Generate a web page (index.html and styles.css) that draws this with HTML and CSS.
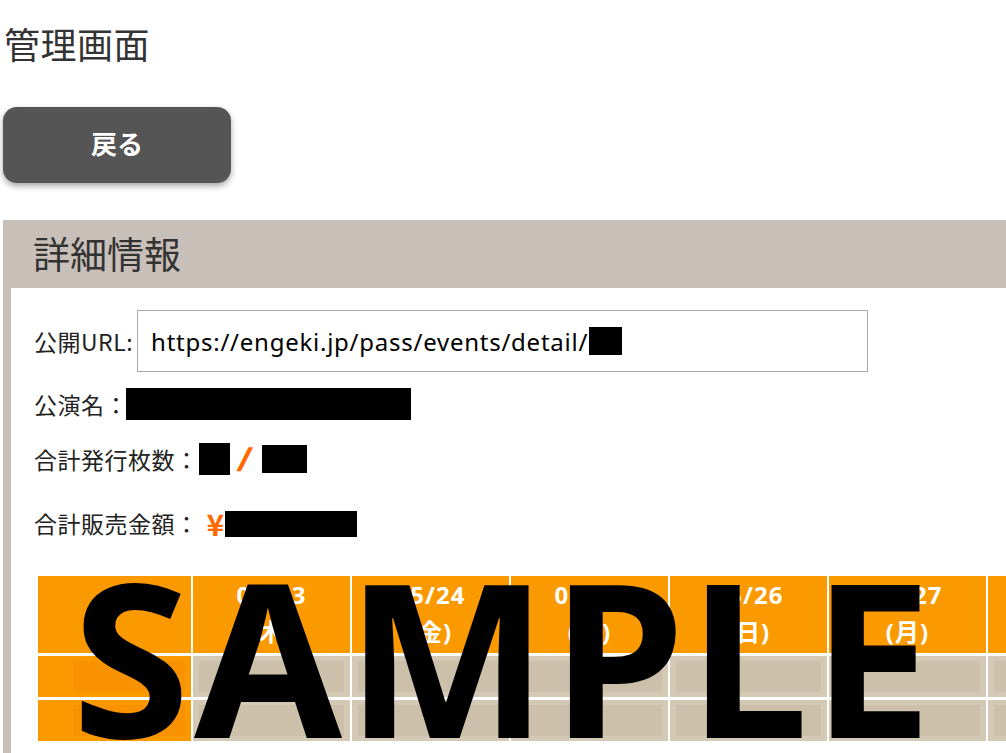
FILE: index.html
```html
<!DOCTYPE html>
<html lang="ja">
<head>
  <meta charset="UTF-8" />
  <meta name="viewport" content="width=device-width, initial-scale=1.0"/>
  <title>管理画面</title>
  <link rel="stylesheet" href="styles.css">
</head>
<body>
  <h1 class="page-title">管理画面</h1>

  <button class="back-button">戻る</button>

  <section class="detail">
    <h2 class="detail-title">詳細情報</h2>
    <div class="detail-body">
      <div class="row url-row">
        <span class="label">公開URL:</span>
        <div class="url-box">https://engeki.jp/pass/events/detail/<span class="mask mask-id"></span></div>
      </div>

      <div class="row name-row">
        <span class="label">公演名：</span>
        <span class="mask mask-name"></span>
      </div>

      <div class="row count-row">
        <span class="label">合計発行枚数：</span>
        <span class="mask mask-issued"></span>
        <span class="accent slash">/</span>
        <span class="mask mask-total"></span>
      </div>

      <div class="row sales-row">
        <span class="label">合計販売金額：</span>
        <span class="accent yen">¥</span>
        <span class="mask mask-sales"></span>
      </div>

      <div class="schedule">
        <div class="cell head corner"></div>
        <div class="cell head">05/23<br>(木)</div>
        <div class="cell head">05/24<br>(金)</div>
        <div class="cell head">05/25<br>(土)</div>
        <div class="cell head">05/26<br>(日)</div>
        <div class="cell head">05/27<br>(月)</div>
        <div class="cell head">05/28<br>(火)</div>

        <div class="cell side"><div class="inner"></div></div>
        <div class="cell"><div class="inner"></div></div>
        <div class="cell"><div class="inner"></div></div>
        <div class="cell"><div class="inner"></div></div>
        <div class="cell"><div class="inner"></div></div>
        <div class="cell"><div class="inner"></div></div>
        <div class="cell"><div class="inner"></div></div>

        <div class="cell side"><div class="inner"></div></div>
        <div class="cell"><div class="inner"></div></div>
        <div class="cell"><div class="inner"></div></div>
        <div class="cell"><div class="inner"></div></div>
        <div class="cell"><div class="inner"></div></div>
        <div class="cell"><div class="inner"></div></div>
        <div class="cell"><div class="inner"></div></div>
      </div>
    </div>
  </section>

  <div class="watermark">SAMPLE</div>
</body>
</html>
```

FILE: styles.css
```css
html {
  overflow: hidden;
}

body {
  font-family: "Noto Sans", "Noto Sans CJK JP", sans-serif;
  color: #222;
  background-color: #fff;
  margin: 0;
  padding: 0 0 0 3px;
  overflow: hidden;
  position: relative;
  height: 753px;
}

.page-title {
  font-family: "Noto Sans CJK JP", sans-serif;
  font-size: 36px;
  font-weight: normal;
  line-height: 54px;
  color: #333;
  margin: 16px 0 0 1px;
  letter-spacing: 0.5px;
}

.back-button {
  display: block;
  width: 228px;
  height: 76px;
  margin-top: 37px;
  padding: 0 0 5px;
  border: none;
  border-radius: 14px;
  background-color: #555;
  color: #fff;
  font-family: "Noto Sans CJK JP", sans-serif;
  font-size: 26px;
  font-weight: bold;
  box-shadow: 0 3px 6px rgba(0, 0, 0, 0.35);
  cursor: pointer;
}

.detail {
  margin-top: 37px;
  background-color: #c9bfb9;
  padding-left: 8px;
}

.detail-title {
  font-family: "Noto Sans CJK JP", sans-serif;
  font-size: 37px;
  font-weight: normal;
  color: #333;
  height: 68px;
  line-height: 66px;
  margin: 0 0 0 -8px;
  padding-left: 30px;
}

.detail-body {
  background-color: #fff;
  padding: 22px 0 20px 23px;
  overflow: hidden;
}

.row {
  display: flex;
  align-items: center;
}

.label {
  font-family: "Noto Sans CJK JP", sans-serif;
  font-size: 23px;
  line-height: 1;
  letter-spacing: 0.5px;
  color: #222;
  white-space: nowrap;
}

.url-row {
  height: 62px;
}

.url-box {
  box-sizing: border-box;
  width: 731px;
  height: 62px;
  margin-left: 4px;
  padding-left: 13px;
  border: 1px solid #aaa;
  display: flex;
  align-items: center;
  font-size: 24px;
  letter-spacing: 0.75px;
  color: #000;
}

.mask {
  display: inline-block;
  background-color: #000;
}

.mask-id {
  width: 33px;
  height: 28px;
  margin-left: 1px;
}

.name-row {
  height: 32px;
  margin-top: 16px;
}

.mask-name {
  width: 285px;
  height: 32px;
  margin-left: -2px;
}

.count-row {
  height: 32px;
  margin-top: 23px;
}

.mask-issued {
  width: 31px;
  height: 32px;
}

.mask-total {
  width: 45px;
  height: 28px;
  margin-left: 11px;
}

.accent {
  color: #ff6a00;
  font-weight: bold;
}

.slash {
  font-size: 33px;
  line-height: 32px;
  margin-left: 8px;
  transform: skewX(-8deg);
}

.sales-row {
  height: 27px;
  margin-top: 35px;
}

.yen {
  font-family: "Noto Sans CJK JP", sans-serif;
  font-size: 30px;
  line-height: 27px;
  margin-left: 8px;
}

.mask-sales {
  width: 132px;
  height: 26px;
  margin-left: 1px;
}

.schedule {
  display: grid;
  grid-template-columns: 153px repeat(6, 157px);
  grid-template-rows: 77px 41px 41px;
  column-gap: 2px;
  row-gap: 3px;
  margin: 39px 0 0 4px;
  width: max-content;
}

.cell {
  background-color: #d4c9b4;
  padding: 5px 6px;
}

.cell .inner {
  height: 100%;
  background-color: #ccc0aa;
}

.cell.side {
  background-color: #fb9a00;
  padding-left: 35px;
}

.cell.side .inner {
  background-color: #f99200;
}

.head {
  background-color: #fb9a00;
  color: #fff;
  font-family: "Noto Sans", "Noto Sans CJK JP", sans-serif;
  font-size: 24px;
  font-weight: bold;
  letter-spacing: 1px;
  line-height: 37px;
  text-align: center;
  padding: 0;
}

.watermark {
  position: absolute;
  left: 72px;
  top: 548px;
  font-family: "Noto Sans", sans-serif;
  font-size: 214px;
  font-weight: bold;
  letter-spacing: 4px;
  line-height: 1;
  color: #000;
  pointer-events: none;
}
```
